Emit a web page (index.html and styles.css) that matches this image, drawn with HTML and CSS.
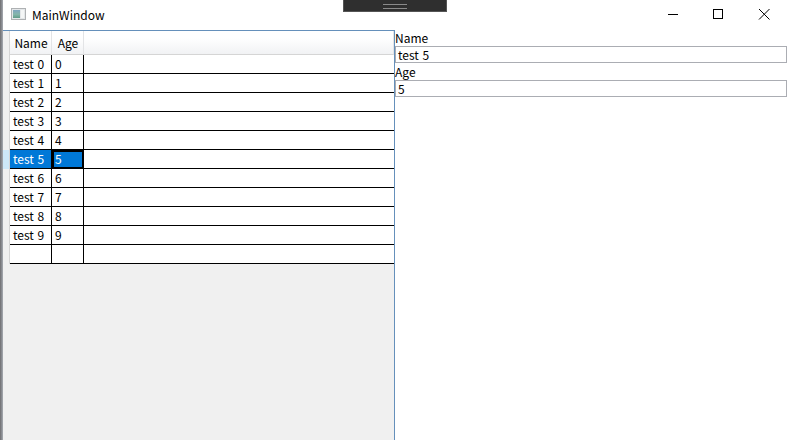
FILE: index.html
```html
<!DOCTYPE html>
<html>
<head>
  <title>MainWindow</title>
  <meta name="viewport" content="width=device-width, initial-scale=1">
  <link rel="stylesheet" href="styles.css">
</head>
<body>
  <div class="desktop-edge"></div>
  <div class="window">
    <div class="titlebar">
      <svg class="app-icon" width="15" height="12" viewBox="0 0 15 12">
        <defs>
          <linearGradient id="pane" x1="0" y1="0" x2="0" y2="1">
            <stop offset="0" stop-color="#7fa6c0"/>
            <stop offset="0.55" stop-color="#84b5aa"/>
            <stop offset="1" stop-color="#5f9c88"/>
          </linearGradient>
        </defs>
        <rect x="0.5" y="0.5" width="14" height="11" fill="#e4e7e9" stroke="#aeb1b3"/>
        <rect x="2" y="2" width="7" height="8" fill="url(#pane)"/>
        <rect x="10" y="2" width="3" height="8" fill="#f4f6f6"/>
      </svg>
      <span class="title">MainWindow</span>
      <div class="win-buttons">
        <svg class="win-btn" width="46" height="29" viewBox="0 0 46 29"><path d="M19 14.500h10" stroke="#000" fill="none"/></svg>
        <svg class="win-btn" width="46" height="29" viewBox="0 0 46 29"><rect x="18.500" y="9.500" width="9" height="9" stroke="#000" fill="none"/></svg>
        <svg class="win-btn" width="46" height="29" viewBox="0 0 46 29"><path d="M18 9l10.500 10.500M28.500 9L18 19.500" stroke="#000" fill="none"/></svg>
      </div>
    </div>
    <div class="content">
      <div class="grid-pane">
        <div class="row header">
          <div class="corner"></div>
          <div class="cell c-name">Name</div>
          <div class="cell c-age">Age</div>
          <div class="cell c-fill"></div>
        </div>
        <div class="row"><div class="row-head"></div><div class="cell c-name">test 0</div><div class="cell c-age">0</div><div class="cell c-fill"></div></div>
        <div class="row"><div class="row-head"></div><div class="cell c-name">test 1</div><div class="cell c-age">1</div><div class="cell c-fill"></div></div>
        <div class="row"><div class="row-head"></div><div class="cell c-name">test 2</div><div class="cell c-age">2</div><div class="cell c-fill"></div></div>
        <div class="row"><div class="row-head"></div><div class="cell c-name">test 3</div><div class="cell c-age">3</div><div class="cell c-fill"></div></div>
        <div class="row"><div class="row-head"></div><div class="cell c-name">test 4</div><div class="cell c-age">4</div><div class="cell c-fill"></div></div>
        <div class="row selected"><div class="row-head"></div><div class="cell c-name">test 5</div><div class="cell c-age focused">5</div><div class="cell c-fill"></div></div>
        <div class="row"><div class="row-head"></div><div class="cell c-name">test 6</div><div class="cell c-age">6</div><div class="cell c-fill"></div></div>
        <div class="row"><div class="row-head"></div><div class="cell c-name">test 7</div><div class="cell c-age">7</div><div class="cell c-fill"></div></div>
        <div class="row"><div class="row-head"></div><div class="cell c-name">test 8</div><div class="cell c-age">8</div><div class="cell c-fill"></div></div>
        <div class="row"><div class="row-head"></div><div class="cell c-name">test 9</div><div class="cell c-age">9</div><div class="cell c-fill"></div></div>
        <div class="row"><div class="row-head"></div><div class="cell c-name"></div><div class="cell c-age"></div><div class="cell c-fill"></div></div>
      </div>
      <div class="form-pane">
        <label class="field-label">Name</label>
        <div class="field">test 5</div>
        <label class="field-label">Age</label>
        <div class="field">5</div>
      </div>
    </div>
  </div>
  <div class="drag-handle"><div class="grip"></div></div>
</body>
</html>
```

FILE: styles.css
```css
html, body {margin: 0; height: 100%; overflow: hidden;}
body {display: flex; background: #fff; font-family: "Noto Sans CJK KR", "Noto Sans", sans-serif; font-size: 12px; color: #000; word-spacing: 1px;}
.desktop-edge {width: 3px; background: linear-gradient(90deg, #6e6e70, #8d9096 60%, #a9adb3);}
.window {flex: 1; display: flex; flex-direction: column; min-width: 0;}

.titlebar {height: 29px; display: flex; align-items: center; padding-left: 8px;}
.app-icon {margin: 0 6px 1px 0;}
.title {font-size: 12px; margin-bottom: 1px;}
.win-buttons {margin-left: auto; display: flex; align-self: flex-start;}
.win-btn {display: block;}

.content {flex: 1; display: flex; min-height: 0;}
.grid-pane {width: 391px; margin-top: 1px; background: #f0f0f0; border-top: 1px solid #6590bb; border-right: 1px solid #6590bb;}
.form-pane {flex: 1; display: flex; flex-direction: column;}

.row {display: flex; height: 19px; box-sizing: border-box;}
.row-head, .corner {width: 6px; background: #f0f0f0; border-right: 1px solid #d5d5d5;}
.cell {box-sizing: border-box; height: 19px; padding: 0 3px; background: #fff; border-right: 1px solid #000; border-bottom: 1px solid #000; line-height: 18px; white-space: nowrap;}
.c-name {width: 42px;}
.c-age {width: 32px;}
.c-fill {flex: 1; border-right: 0;}

.row.header {height: 24px;}
.header .cell {height: 24px; background: linear-gradient(#fff 30%, #f1f2f4); border-right: 1px solid #e3e4e6; border-bottom: 1px solid #d5d5d5; line-height: 24px; text-align: center; padding: 0 0 0 1px;}

.selected .c-name, .selected .c-age {background: #0078d7; color: #fff;}
.selected .row-head {background: #cde8f8;}
.focused {outline: 2px solid #000; outline-offset: -2px;}

.field-label {height: 17px; line-height: 17px;}
.field {box-sizing: border-box; height: 17px; line-height: 15px; padding: 0 2px; border: 1px solid #abadb3;}

.drag-handle {position: absolute; top: 0; left: 343px; width: 104px; height: 12px; box-sizing: border-box; background: #2f2f2f; border: 1px solid #555; border-top: 0;}
.grip {width: 24px; height: 3px; margin: 4px auto 0; border-top: 1px solid #8a8a8a; border-bottom: 1px solid #8a8a8a;}
```
